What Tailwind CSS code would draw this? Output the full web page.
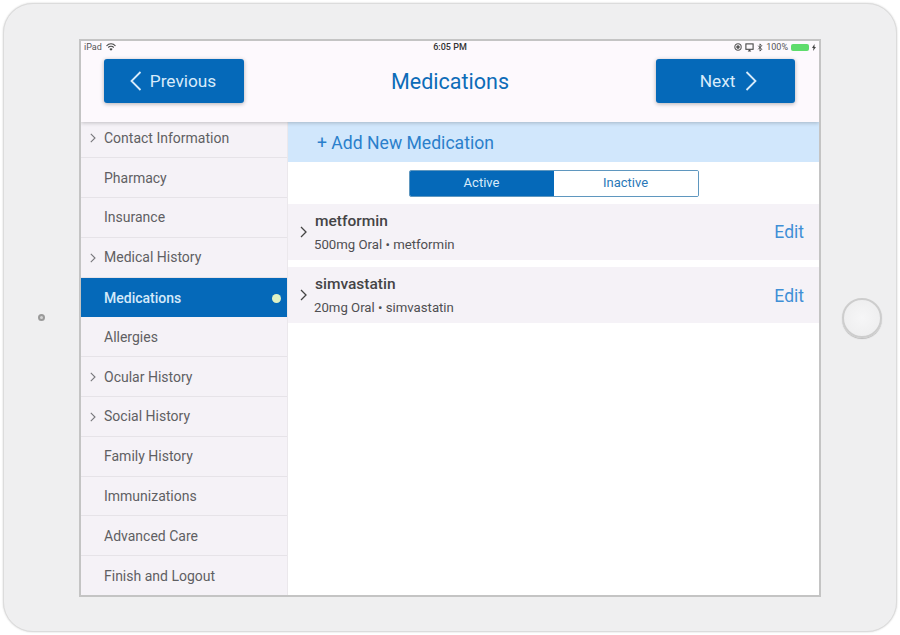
<!DOCTYPE html>
<html lang="en">
<head>
    <meta charset="UTF-8">
    <title>Medications</title>
    <script src="https://cdn.jsdelivr.net/npm/@tailwindcss/browser@4"></script>
</head>
<body class="bg-white overflow-hidden font-['Roboto','Noto_Sans',sans-serif]">
    <div class="w-[900px] h-[635px] pt-[3px] px-[3px]">
        <!-- device frame -->
        <div class="flex items-center h-[629px] rounded-[30px] bg-[#efeff0] border border-[#dcdcdc] shadow-[0_0_2px_#cfcfcf]">
            <div class="flex w-[75px] justify-center">
                <div class="size-[7px] rounded-full border-2 border-[#9a9a9a] bg-[#d4d4d4]"></div>
            </div>

            <!-- screen -->
            <div class="flex flex-col w-[742px] h-[558px] border-2 border-[#c4c4c4] bg-white overflow-hidden">
                <header class="relative z-10 h-[81px] bg-[#fdf9fd] shadow-[0_1px_4px_rgba(0,0,0,0.22)]">
                    <div class="grid grid-cols-3 items-center h-[12px] px-[3px] pt-[1px] text-[9px] leading-none text-[#555]">
                        <div class="flex items-center gap-[4px]">
                            <span>iPad</span>
                            <svg class="w-[10px] h-[8px]" viewBox="0 0 20 15" fill="none" stroke="#444" stroke-width="2.200"><path d="M1 5.500C6-.5 14-.5 19 5.500"/><path d="M4.500 8.500c3.200-3.400 7.800-3.400 11 0"/><path d="M10 15 6.800 11.500c2-1.700 4.400-1.700 6.400 0Z" fill="#444" stroke="none"/></svg>
                        </div>
                        <div class="text-center font-medium text-[#333]">6:05 PM</div>
                        <div class="flex items-center justify-end gap-[3px]">
                            <svg class="size-[8px]" viewBox="0 0 10 10" fill="none" stroke="#555" stroke-width="1.300"><circle cx="5" cy="5" r="4"/><circle cx="5" cy="5" r="1.500" fill="#555"/></svg>
                            <svg class="size-[9px]" viewBox="0 0 10 10" fill="none" stroke="#444" stroke-width="1.200"><rect x="1" y="1" width="8" height="6"/><path d="M3 9.500h4L5 7Z" fill="#444" stroke="none"/></svg>
                            <svg class="w-[6px] h-[9px]" viewBox="0 0 6 10" fill="none" stroke="#444" stroke-width="1"><path d="M1 3l4 4-2 2V1l2 2-4 4"/></svg>
                            <span>100%</span>
                            <div class="w-[18px] h-[7px] rounded-[2px] bg-[#5fdc6c]"></div>
                            <svg class="w-[4px] h-[7px]" viewBox="0 0 4 7" fill="#444"><path d="M2.500 0 0 4h1.500L1 7l3-4H2.500Z"/></svg>
                        </div>
                    </div>
                    <div class="flex items-center justify-between pl-[23px] pr-[24px] pt-[6px]">
                        <button class="flex items-center justify-center gap-[8px] w-[140px] h-[44px] pt-[3px] pr-[2px] rounded-[3px] bg-[#0569b9] text-[#d8ebfa] text-[17.300px] shadow-[0_1px_4px_rgba(0,0,0,0.3)]">
                            <svg class="w-[12px] h-[20px] -mt-[3px]" viewBox="0 0 12 20" fill="none" stroke="#d8ebfa" stroke-width="1.800"><path d="M10.500 1 1.500 10l9 9"/></svg>
                            <span>Previous</span>
                        </button>
                        <h1 class="text-[21.500px] pt-[3px] text-[#0d6cb8]">Medications</h1>
                        <button class="flex items-center justify-center gap-[10px] w-[139px] h-[44px] pt-[3px] pl-[6px] rounded-[3px] bg-[#0569b9] text-[#d8ebfa] text-[17.300px] shadow-[0_1px_4px_rgba(0,0,0,0.3)]">
                            <span>Next</span>
                            <svg class="w-[12px] h-[20px] -mt-[3px]" viewBox="0 0 12 20" fill="none" stroke="#d8ebfa" stroke-width="1.800"><path d="M1.500 1l9 9-9 9"/></svg>
                        </button>
                    </div>
                </header>

                <div class="flex flex-1 min-h-0">
                    <!-- sidebar -->
                    <nav class="-mt-[3px] w-[207px] shrink-0 bg-[#f5f2f7] border-r border-[#ebe8ec] text-[14px] text-[#5f5f63]">
                        <div class="flex items-center h-[39.800px] pt-[1px] border-b border-[#e6e3e8] pl-[9px]">
                            <svg class="w-[6px] h-[10px] mr-[8px]" viewBox="0 0 6 10" fill="none" stroke="#77777b" stroke-width="1.100"><path d="M.8.800 5 5 .8 9.200"/></svg>Contact Information
                        </div>
                        <div class="flex items-center h-[39.800px] pt-[1px] border-b border-[#e6e3e8] pl-[23px]">Pharmacy</div>
                        <div class="flex items-center h-[39.800px] pt-[1px] border-b border-[#e6e3e8] pl-[23px]">Insurance</div>
                        <div class="flex items-center h-[39.800px] pt-[1px] border-b border-[#e6e3e8] pl-[9px]">
                            <svg class="w-[6px] h-[10px] mr-[8px]" viewBox="0 0 6 10" fill="none" stroke="#77777b" stroke-width="1.100"><path d="M.8.800 5 5 .8 9.200"/></svg>Medical History
                        </div>
                        <div class="flex items-center justify-between h-[39.800px] pt-[1px] bg-[#0569b9] pl-[23px] pr-[6px] font-medium text-[#d4e9fa]">
                            <span>Medications</span>
                            <span class="size-[9px] rounded-full bg-[#dff2c4]"></span>
                        </div>
                        <div class="flex items-center h-[39.800px] pt-[1px] border-b border-[#e6e3e8] pl-[23px]">Allergies</div>
                        <div class="flex items-center h-[39.800px] pt-[1px] border-b border-[#e6e3e8] pl-[9px]">
                            <svg class="w-[6px] h-[10px] mr-[8px]" viewBox="0 0 6 10" fill="none" stroke="#77777b" stroke-width="1.100"><path d="M.8.800 5 5 .8 9.200"/></svg>Ocular History
                        </div>
                        <div class="flex items-center h-[39.800px] pt-[1px] border-b border-[#e6e3e8] pl-[9px]">
                            <svg class="w-[6px] h-[10px] mr-[8px]" viewBox="0 0 6 10" fill="none" stroke="#77777b" stroke-width="1.100"><path d="M.8.800 5 5 .8 9.200"/></svg>Social History
                        </div>
                        <div class="flex items-center h-[39.800px] pt-[1px] border-b border-[#e6e3e8] pl-[23px]">Family History</div>
                        <div class="flex items-center h-[39.800px] pt-[1px] border-b border-[#e6e3e8] pl-[23px]">Immunizations</div>
                        <div class="flex items-center h-[39.800px] pt-[1px] border-b border-[#e6e3e8] pl-[23px]">Advanced Care</div>
                        <div class="flex items-center h-[39.800px] pt-[1px] pl-[23px]">Finish and Logout</div>
                    </nav>

                    <!-- main -->
                    <main class="flex-1 bg-white">
                        <div class="flex items-center h-[40px] pt-[4px] bg-[#d1e7fc] pl-[29px] text-[17.600px] text-[#2a7fcb]">+ Add New Medication</div>
                        <div class="flex justify-center pt-[8px] pb-[7px]">
                            <div class="flex w-[290px] h-[27px] rounded-[2px] border border-[#5f97bf] text-[13px] overflow-hidden">
                                <div class="flex flex-1 items-center justify-center bg-[#0569b9] text-[#d8ebfa]">Active</div>
                                <div class="flex flex-1 items-center justify-center bg-white text-[#2a78b8]">Inactive</div>
                            </div>
                        </div>
                        <div class="flex flex-col gap-[7px]">
                            <div class="flex items-center h-[56px] bg-[#f5f2f7] pl-[12px] pr-[15px]">
                                <svg class="w-[7px] h-[12px] mr-[7px]" viewBox="0 0 7 12" fill="none" stroke="#444" stroke-width="1.300"><path d="M1 1l5 5-5 5"/></svg>
                                <div class="flex-1 pt-[1px]">
                                    <div class="text-[15.500px] font-medium leading-[18px] text-[#444446] pl-[1px]">metformin</div>
                                    <div class="text-[13.200px] leading-[16px] mt-[7px] text-[#4f4f52]">500mg Oral • metformin</div>
                                </div>
                                <span class="text-[17.500px] pt-[2px] text-[#3f8fd6]">Edit</span>
                            </div>
                            <div class="flex items-center h-[56px] bg-[#f5f2f7] pl-[12px] pr-[15px]">
                                <svg class="w-[7px] h-[12px] mr-[7px]" viewBox="0 0 7 12" fill="none" stroke="#444" stroke-width="1.300"><path d="M1 1l5 5-5 5"/></svg>
                                <div class="flex-1 pt-[1px]">
                                    <div class="text-[15.500px] font-medium leading-[18px] text-[#444446] pl-[1px]">simvastatin</div>
                                    <div class="text-[13.200px] leading-[16px] mt-[7px] text-[#4f4f52]">20mg Oral • simvastatin</div>
                                </div>
                                <span class="text-[17.500px] pt-[3px] text-[#3f8fd6]">Edit</span>
                            </div>
                        </div>
                    </main>
                </div>
            </div>

            <div class="flex flex-1 justify-center pl-[6px]">
                <div class="size-[40px] rounded-full border-2 border-[#cdcdcd] bg-[radial-gradient(circle,#f6f6f7,#ececed)] shadow-[0_1px_1px_#bbb]"></div>
            </div>
        </div>
    </div>
</body>
</html>
